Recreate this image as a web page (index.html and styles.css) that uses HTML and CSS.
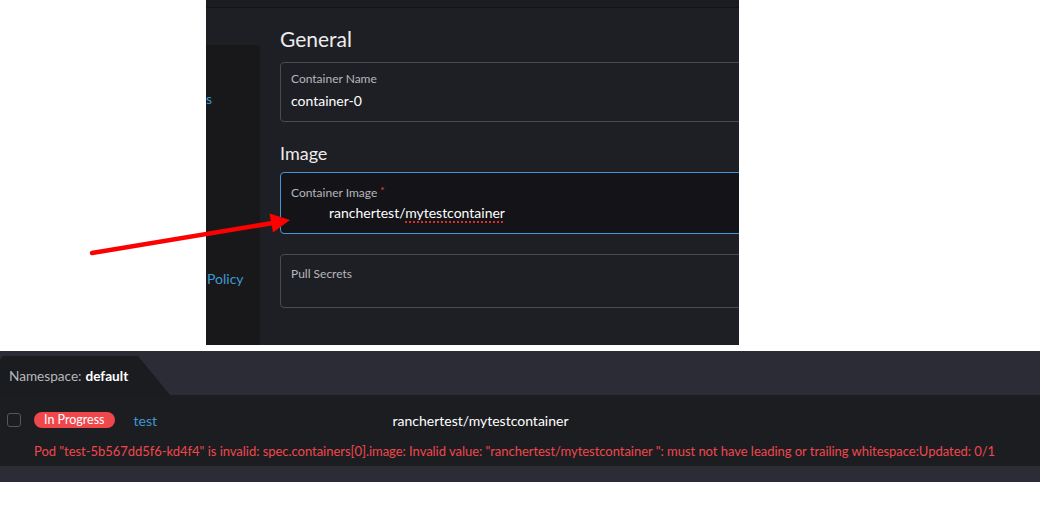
FILE: index.html
```html
<!DOCTYPE html>
<html lang="en">
<head>
<meta charset="utf-8">
<title>Container Image</title>
<link rel="stylesheet" href="styles.css">
</head>
<body>
<div class="page">
  <div class="top">
    <div class="shot">
      <div class="shot-bar"></div>
      <div class="shot-body">
        <nav class="side">
          <div class="side-head"></div>
          <div class="side-list">
            <div class="side-item side-item-ports">s</div>
            <div class="side-item side-item-policy">Policy</div>
          </div>
        </nav>
        <main class="form">
          <h2 class="h-general">General</h2>
          <div class="field field-name">
            <div class="field-label">Container Name</div>
            <div class="field-value">container-0</div>
          </div>
          <h3 class="h-image">Image</h3>
          <div class="field field-image">
            <div class="field-label">Container Image <span class="req">*</span></div>
            <div class="field-value field-value-indent">ranchertest/<span class="spell">mytestcontainer</span></div>
          </div>
          <div class="field field-secrets">
            <div class="field-label">Pull Secrets</div>
          </div>
        </main>
      </div>
    </div>
  </div>

  <section class="strip">
    <div class="strip-head">
      <div class="ns-tab"><span class="ns-key">Namespace:</span> <span class="ns-val">default</span></div>
    </div>
    <div class="strip-row">
      <div class="row-main">
        <span class="check"></span>
        <span class="badge">In Progress</span>
        <span class="row-name">test</span>
        <span class="row-image">ranchertest/mytestcontainer</span>
      </div>
      <div class="row-error">Pod "test-5b567dd5f6-kd4f4" is invalid: spec.containers[0].image: Invalid value: "ranchertest/mytestcontainer ": must not have leading or trailing whitespace:Updated: 0/1</div>
    </div>
    <div class="strip-foot"></div>
  </section>

  <svg class="arrow" width="1040" height="511" viewBox="0 0 1040 511" aria-hidden="true">
    <line x1="92" y1="253" x2="273" y2="223" stroke="#ff0000" stroke-width="4.5" stroke-linecap="round"/>
    <polygon points="290,220 269.5,213.5 273,232.5" fill="#ff0000"/>
  </svg>
</div>
</body>
</html>
```

FILE: styles.css
```css
* { box-sizing: border-box; }

html, body {
  margin: 0;
  padding: 0;
  background: #ffffff;
}

body {
  font-family: Lato, "Noto Sans", "Liberation Sans", sans-serif;
  width: 1040px;
  height: 511px;
  overflow: hidden;
}

.page {
  position: relative;
  width: 1040px;
  height: 511px;
}

/* ---------- top screenshot ---------- */
.top {
  display: flex;
  padding-left: 206px;
}

.shot {
  width: 533px;
  height: 345px;
  display: flex;
  flex-direction: column;
  background: #1e1f24;
  overflow: hidden;
}

.shot-bar {
  height: 8px;
  flex: none;
  background: #1b1c20;
  border-bottom: 1px solid #141417;
}

.shot-body {
  flex: 1;
  display: flex;
  min-height: 0;
}

.side {
  width: 54px;
  flex: none;
  display: flex;
  flex-direction: column;
  overflow: hidden;
}

.side-head {
  height: 37px;
  flex: none;
  background: #1e1f24;
}

.side-list {
  flex: 1;
  background: #18181b;
  display: flex;
  flex-direction: column;
}

.side-item {
  white-space: nowrap;
  color: #3d98d3;
  font-size: 14px;
  line-height: 20px;
}

.side-item-ports {
  margin-top: 44px;
  padding-left: 0;
}

.side-item-policy {
  margin-top: 160px;
  padding-left: 1px;
}

.form {
  flex: 1;
  padding: 18px 0 0 20px;
  background: #1e1f24;
  overflow: hidden;
}

.h-general {
  margin: 0 0 11px;
  font-size: 21px;
  line-height: 25px;
  font-weight: 400;
  color: #ececec;
}

.h-image {
  margin: 20px 0 8px;
  font-size: 18px;
  line-height: 22px;
  font-weight: 400;
  color: #ececec;
}

.field {
  width: calc(100% + 20px);
  border: 1px solid #4a4b51;
  border-radius: 4px;
  padding: 9px 10px 11px;
}

.field-label {
  font-size: 12px;
  line-height: 14px;
  color: #b6b7bb;
}

.field-value {
  margin-top: 6px;
  font-size: 14px;
  line-height: 18px;
  color: #ffffff;
}

.field-name {
  height: 60px;
}

.field-image {
  height: 62px;
  padding-top: 10px;
  border-color: #3d98d3;
  background: #141418;
}

.field-image .field-value {
  margin-top: 4px;
}

.field-value-indent {
  padding-left: 38px;
}

.spell {
  text-decoration: underline dotted #e02b2b;
  text-decoration-thickness: 2px;
  text-underline-offset: 3px;
}

.req {
  color: #f04a50;
  font-size: 10px;
  vertical-align: 3px;
}

.field-secrets {
  height: 54px;
  margin-top: 20px;
  padding-top: 12px;
}

/* ---------- bottom strip ---------- */
.strip {
  margin-top: 6px;
  width: 1040px;
  display: flex;
  flex-direction: column;
}

.strip-head {
  height: 44px;
  padding-top: 5px;
  background: #2b2c35;
}

.ns-tab {
  width: 170px;
  height: 39px;
  padding-left: 9px;
  display: flex;
  align-items: center;
  gap: 4px;
  background: #1b1c20;
  border-top-left-radius: 5px;
  clip-path: polygon(0 0, 138px 0, 170px 100%, 0 100%);
  font-size: 13.6px;
  white-space: nowrap;
}

.ns-key {
  color: #b6b7bb;
}

.ns-val {
  color: #ffffff;
  font-weight: 700;
}

.strip-row {
  height: 71px;
  background: #1c1d21;
  padding: 17px 0 0 7px;
}

.row-main {
  height: 16px;
  display: flex;
  align-items: center;
}

.check {
  width: 14px;
  height: 14px;
  flex: none;
  border: 1.5px solid #55565c;
  border-radius: 3px;
}

.badge {
  margin-left: 13px;
  height: 16px;
  padding: 0 10px;
  border-radius: 8px;
  background: #f0474d;
  color: #ffffff;
  font-size: 12.5px;
  line-height: 16px;
}

.row-name {
  margin-left: 19px;
  width: 259px;
  flex: none;
  color: #3d98d3;
  font-size: 14px;
}

.row-image {
  color: #ffffff;
  font-size: 14px;
}

.row-error {
  margin: 14px 0 0 27px;
  font-size: 13px;
  line-height: 18px;
  letter-spacing: -0.035px;
  color: #f0474d;
  white-space: nowrap;
}

.strip-foot {
  height: 16px;
  background: #2b2c35;
}

/* annotation arrow lies over both images */
.arrow {
  position: absolute;
  left: 0;
  top: 0;
  pointer-events: none;
}
```
